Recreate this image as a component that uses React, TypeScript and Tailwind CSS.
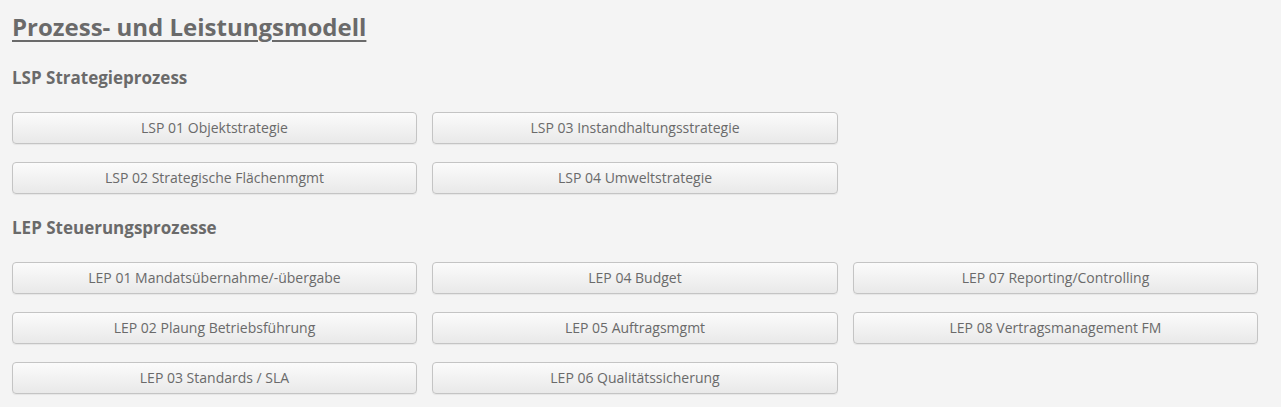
import React from "react";

const Btn = ({ label }: { label: string }) => (
  <button className="h-[32px] w-full rounded-[4px] border border-[#c4c4c4] bg-gradient-to-b from-[#fbfbfb] to-[#e9e9e9] pb-[2px] text-[14px] text-[#6a6a6a] shadow-[0_1px_1px_rgba(0,0,0,0.06)]">
    {label}
  </button>
);

const Grid = ({ items }: { items: (string | null)[] }) => (
  <div className="grid grid-cols-[405px_406px_405px] gap-x-[15px] gap-y-[18px]">
    {items.map((t, i) => (t ? <Btn key={t} label={t} /> : <div key={i} />))}
  </div>
);

export default function App() {
  return (
    <div
      className="min-h-[407px] w-full bg-[#f4f4f4] px-3 pt-[12px] text-[#6a6a6a]"
      style={{ fontFamily: '"Open Sans", "Noto Sans", sans-serif' }}
    >
      <h1 className="text-[24px] font-bold leading-[30px] underline decoration-[2px] underline-offset-[4px]">
        Prozess- und Leistungsmodell
      </h1>
      <h3 className="mt-[24px] text-[17px] font-bold leading-[24px]">LSP Strategieprozess</h3>
      <div className="mt-[22px]">
        <Grid
          items={[
            "LSP 01 Objektstrategie",
            "LSP 03 Instandhaltungsstrategie",
            null,
            "LSP 02 Strategische Flächenmgmt",
            "LSP 04 Umweltstrategie",
            null,
          ]}
        />
      </div>
      <h3 className="mt-[22px] text-[17px] font-bold leading-[24px]">LEP Steuerungsprozesse</h3>
      <div className="mt-[22px]">
        <Grid
          items={[
            "LEP 01 Mandatsübernahme/-übergabe",
            "LEP 04 Budget",
            "LEP 07 Reporting/Controlling",
            "LEP 02 Plaung Betriebsführung",
            "LEP 05 Auftragsmgmt",
            "LEP 08 Vertragsmanagement FM",
            "LEP 03 Standards / SLA",
            "LEP 06 Qualitätssicherung",
            null,
          ]}
        />
      </div>
    </div>
  );
}
